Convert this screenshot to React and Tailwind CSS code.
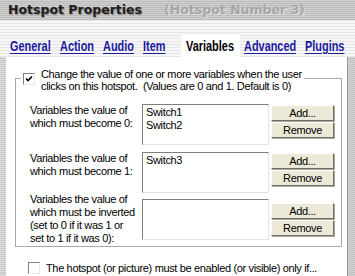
import React from "react";

const tabs = [
  { name: "General", w: "w-[40px]" },
  { name: "Action", w: "w-[33px]" },
  { name: "Audio", w: "w-[30px]" },
  { name: "Item", w: "w-[22px]" },
  { name: "Variables", w: "w-[49px]", active: true },
  { name: "Advanced", w: "w-[51px]" },
  { name: "Plugins", w: "w-[41px]" },
];

const CheckBox = ({ checked }) => (
  <div className="w-[12px] h-[12px] shrink-0 border-t border-l border-[#7f7f7f] border-b border-r border-b-[#e8e8e8] border-r-[#e8e8e8] bg-white flex items-center justify-center">
    {checked && (
      <svg width="8" height="8" viewBox="0 0 8 8">
        <path d="M1 3.5 L3 5.5 L7 1.5" stroke="#000" strokeWidth="1.6" fill="none" />
      </svg>
    )}
  </div>
);

const Button = ({ children }) => (
  <button className="w-[63px] h-[16px] bg-[#ece9d8] border border-t-white border-l-white border-b-[#716f64] border-r-[#716f64] text-[11px] leading-none text-black shadow-[1px_1px_0_#aca899] flex items-center justify-center">
    {children}
  </button>
);

const VarRow = ({ label, items, center }) => (
  <div className={`flex ${center ? "items-center" : "items-start"}`}>
    <div className="w-[112px] leading-[13px] whitespace-nowrap">{label}</div>
    <div className="w-[127px] h-[41px] border-t border-l border-[#7f7f7f] border-b border-r border-b-[#e4e4e4] border-r-[#e4e4e4] bg-white px-[3px] pt-[1px] leading-[13px]">
      {items.map((it) => (
        <div key={it}>{it}</div>
      ))}
    </div>
    <div className="ml-[2px] flex flex-col gap-[1px] pt-[1px]">
      <Button>Add...</Button>
      <Button>Remove</Button>
    </div>
  </div>
);

export default function App() {
  return (
    <div className="w-[355px] h-[276px] overflow-hidden flex flex-col bg-[repeating-linear-gradient(to_bottom,#f6f6f6_0px,#f6f6f6_2px,#e6e6e6_2px,#e6e6e6_3px)] text-[11px] tracking-[-0.35px] text-black font-['Liberation_Sans',Arial,sans-serif]">
      <div className="h-[20px] shrink-0 flex items-center gap-[22px] pl-[8px] bg-[repeating-linear-gradient(to_bottom,#d0d0d0_0px,#d0d0d0_1px,#bcbcbc_1px,#bcbcbc_2px)] font-['DejaVu_Sans',Verdana,sans-serif] font-bold text-[12.5px] tracking-normal">
        <span className="text-[#1e1e1e] [text-shadow:1px_1px_1px_#8a8a8a]">Hotspot Properties</span>
        <span className="text-[#a6a6a6] [text-shadow:1px_1px_0_#e4e4e4]">(Hotspot Number 3)</span>
      </div>

      <div className="h-[37px] shrink-0 flex items-end pl-[10px] font-bold text-[14px] tracking-normal">
        {tabs.map((t) =>
          t.active ? (
            <div key={t.name} className="bg-white h-[22px] ml-[6px] mr-[4px] px-[5px] flex items-center">
              <div className={`${t.w} overflow-visible`}>
                <span className="inline-block origin-left scale-x-[0.78] text-black">{t.name}</span>
              </div>
            </div>
          ) : (
            <a key={t.name} href="#" className={`${t.w} h-[22px] mr-[10px] flex items-center text-[#1a1aa0] overflow-visible`}>
              <span className="inline-block origin-left scale-x-[0.78] underline underline-offset-2 whitespace-nowrap">{t.name}</span>
            </a>
          )
        )}
      </div>

      <div className="flex-1 flex">
        <div className="w-[6px] shrink-0 bg-[repeating-linear-gradient(to_bottom,#dcdcdc_0px,#dcdcdc_1px,#c8c8c8_1px,#c8c8c8_2px)]" />
        <div className="w-[342px] bg-white border-r border-[#9a9a9a] pl-[9px] pr-[5px] pt-[21px]">
          <div className="border border-[#a8a8a8] pl-[14px] pr-[7px] pb-[1px]">
            <div className="-mt-[11px] -ml-[9px] w-fit bg-white flex items-start gap-[6px] pl-[2px] pr-[2px] leading-[12px]">
              <div className="mt-[5px]">
                <CheckBox checked />
              </div>
              <div className="whitespace-nowrap">
                <div>Change the value of one or more variables when the user</div>
                <div>clicks on this hotspot.&nbsp; (Values are 0 and 1. Default is 0)</div>
              </div>
            </div>
            <div className="mt-[12px] flex flex-col">
              <VarRow label={<>Variables the value of<br />which must become 0:</>} items={["Switch1", "Switch2"]} />
              <div className="h-[7px]" />
              <VarRow label={<>Variables the value of<br />which must become 1:</>} items={["Switch3"]} />
              <VarRow
                center
                label={<>Variables the value of<br />which must be inverted<br />(set to 0 if it was 1 or<br />set to 1 if it was 0):</>}
                items={[]}
              />
            </div>
          </div>
          <div className="mt-[13px] ml-[13px] flex items-center gap-[6px]">
            <CheckBox />
            <span className="whitespace-nowrap">The hotspot (or picture) must be enabled (or visible) only if...</span>
          </div>
        </div>
        <div className="flex-1 bg-[repeating-linear-gradient(to_bottom,#d4d4d4_0px,#d4d4d4_1px,#c0c0c0_1px,#c0c0c0_2px)]" />
      </div>
    </div>
  );
}
